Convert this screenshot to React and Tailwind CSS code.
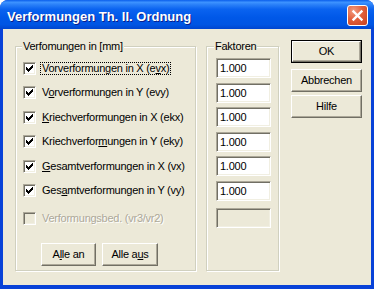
import React from "react";

const FONT = { fontFamily: '"Liberation Sans", Arial, sans-serif' };

function Check() {
  const cols = [[0, 2], [1, 3], [2, 4], [3, 3], [4, 2], [5, 1], [6, 0]];
  return (
    <svg width="7" height="7" viewBox="0 0 7 7" shapeRendering="crispEdges">
      {cols.map(([x, y]) => (
        <rect key={x} x={x} y={y} width="1" height="3" fill="#000" />
      ))}
    </svg>
  );
}

function Checkbox({ disabled }) {
  return (
    <div
      className={
        "w-[13px] h-[13px] shrink-0 flex items-center justify-center border border-t-[#ACA899] border-l-[#ACA899] border-r-white border-b-white shadow-[inset_1px_1px_0_#716F64,inset_-1px_-1px_0_#F1EFE2] " +
        (disabled ? "bg-[#ECE9D8]" : "bg-white")
      }
    >
      {!disabled && <Check />}
    </div>
  );
}

function U({ children }) {
  return <span className="underline underline-offset-[1px]">{children}</span>;
}

function Row({ children, focus, disabled, className = "" }) {
  return (
    <div className={"flex items-center h-[24.5px] " + className}>
      <Checkbox disabled={disabled} />
      <span
        className={
          "ml-[4px] px-[1px] border leading-[11px] whitespace-nowrap " +
          (focus ? "border-dotted border-black " : "border-transparent ") +
          (disabled ? "text-[#ACA899] [text-shadow:1px_1px_0_#fff]" : "text-black")
        }
      >
        {children}
      </span>
    </div>
  );
}

function Field({ value, disabled, className = "" }) {
  return (
    <div className={"flex items-center h-[24.5px] " + className}>
      <div
        className={
          "w-[55px] h-[20px] flex items-center pl-[2px] text-[11px] border border-t-[#ACA899] border-l-[#ACA899] border-r-white border-b-white shadow-[inset_1px_1px_0_#716F64,inset_-1px_-1px_0_#F1EFE2] " +
          (disabled ? "bg-[#ECE9D8]" : "bg-white")
        }
      >
        <span className="pl-[1px]">{value}</span>
      </div>
    </div>
  );
}

function Btn({ children, def, className = "" }) {
  const inner = (
    <div className="w-full h-full flex items-center justify-center border border-t-white border-l-white border-r-[#716F64] border-b-[#716F64] shadow-[inset_-1px_-1px_0_#ACA899] bg-[#ECE9D8] text-black text-[11px] leading-none">
      {children}
    </div>
  );
  if (def) {
    return <div className={"border border-black " + className}>{inner}</div>;
  }
  return <div className={className}>{inner}</div>;
}

export default function App() {
  return (
    <div
      className="w-[374px] h-[289px] flex flex-col rounded-t-[8px] overflow-hidden bg-[#0842D8] text-[11px] tracking-[-0.25px]"
      style={FONT}
    >
      <div className="h-[29px] shrink-0 flex items-start pl-[7px] pr-[6px] bg-[linear-gradient(180deg,#0A5EEB_0%,#3D93FF_8%,#2A80F8_16%,#0A63F0_32%,#0058E8_60%,#0055E3_85%,#0045CF_100%)]">
        <span className="mt-[10px] text-white font-bold text-[13px] leading-[13px] tracking-normal [text-shadow:1px_1px_0_#0A1E8C]">
          Verformungen Th. II. Ordnung
        </span>
        <div className="ml-auto mt-[5px] w-[21px] h-[21px] rounded-[3px] border border-white flex items-center justify-center bg-[radial-gradient(circle_at_30%_25%,#F29C80_0%,#E2603C_45%,#C8401E_100%)]">
          <svg width="13" height="13" viewBox="0 0 13 13">
            <path d="M2.5 2.5 L10.5 10.5 M10.5 2.5 L2.5 10.5" stroke="#fff" strokeWidth="2.4" strokeLinecap="square" />
          </svg>
        </div>
      </div>
      <div className="flex-1 flex mx-[3px] mb-[4px] bg-[#ECE9D8] pt-[11px] pl-[12px]">
        <fieldset className="w-[181px] h-[231px] border border-[#D0D0BF] shadow-[inset_1px_1px_0_#fff,1px_1px_0_#fff]">
          <legend className="ml-[6px] px-[1px] leading-[13px] bg-[#ECE9D8] text-black">
            Verfomungen in [mm]
          </legend>
          <div className="pl-[7px] pt-[3px]">
            <Row focus>
              Vorverformungen in X (e<U>v</U>x)
            </Row>
            <Row>
              V<U>o</U>rverformungen in Y (evy)
            </Row>
            <Row>
              <U>K</U>riechverformungen in X (ekx)
            </Row>
            <Row>
              Kriechverfor<U>m</U>ungen in Y (eky)
            </Row>
            <Row>
              <U>G</U>esamtverformungen in X (vx)
            </Row>
            <Row>
              Ges<U>a</U>mtverformungen in Y (vy)
            </Row>
            <Row disabled className="mt-[3px] !h-[24px]">
              Verformungsbed. (vr3/vr2)
            </Row>
            <div className="flex gap-[6px] pl-[18px] mt-[13px]">
              <Btn className="w-[55px] h-[23px]">
                A<U>l</U>le an
              </Btn>
              <Btn className="w-[56px] h-[23px]">
                Alle a<U>u</U>s
              </Btn>
            </div>
          </div>
        </fieldset>
        <fieldset className="ml-[10px] w-[73px] h-[231px] border border-[#D0D0BF] shadow-[inset_1px_1px_0_#fff,1px_1px_0_#fff]">
          <legend className="ml-[7px] px-[1px] leading-[13px] bg-[#ECE9D8] text-black">
            Faktoren
          </legend>
          <div className="pl-[9px] pt-[3px]">
            <Field value="1.000" />
            <Field value="1.000" />
            <Field value="1.000" />
            <Field value="1.000" />
            <Field value="1.000" />
            <Field value="1.000" />
            <Field value="" disabled className="mt-[3px] !h-[24px]" />
          </div>
        </fieldset>
        <div className="ml-[12px] flex flex-col">
          <Btn def className="w-[71px] h-[23px]">
            OK
          </Btn>
          <Btn className="w-[71px] h-[23px] mt-[6px]">Abbrechen</Btn>
          <Btn className="w-[71px] h-[23px] mt-[3px]">Hilfe</Btn>
        </div>
      </div>
    </div>
  );
}
